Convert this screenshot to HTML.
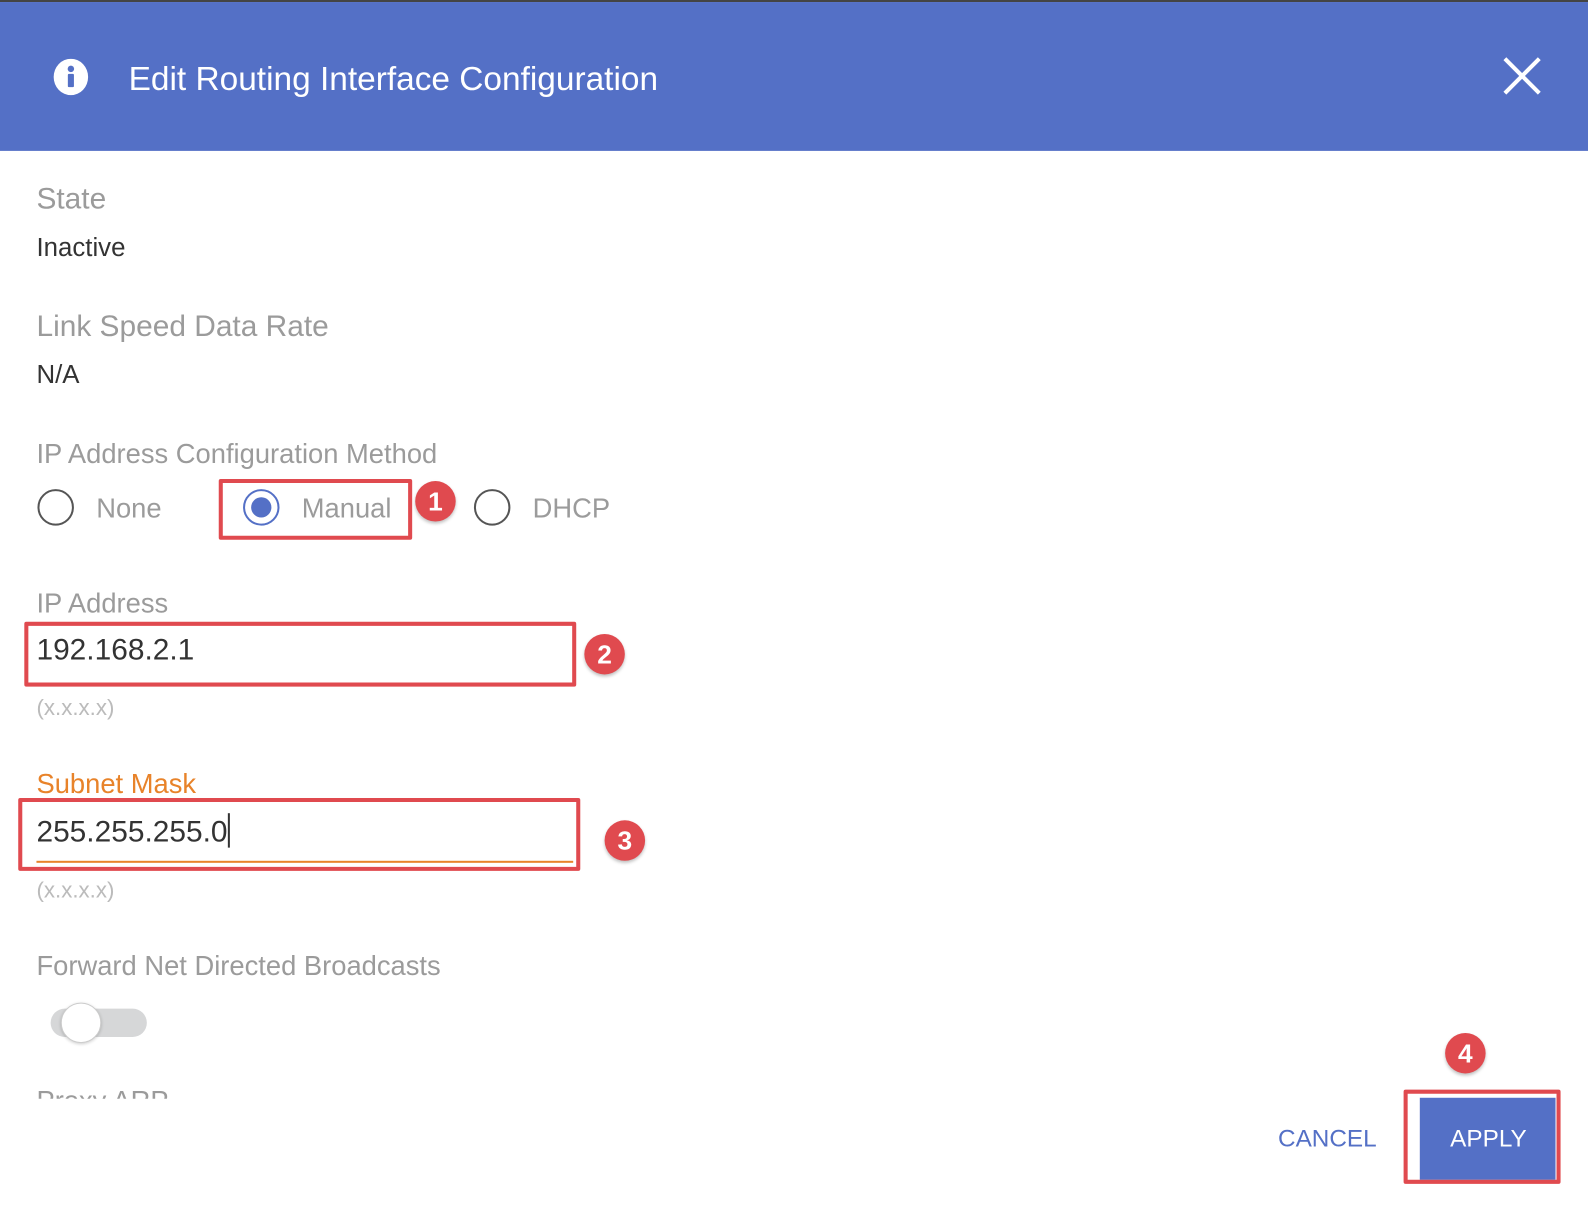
<!DOCTYPE html>
<html><head><meta charset="utf-8"><style>
body{margin:0;width:1588px;height:1206px;background:#fff;position:relative;overflow:hidden;font-family:"Liberation Sans",sans-serif;}
#w{position:absolute;left:0;top:0;width:1568px;height:1191px;transform:scale(1.0127);transform-origin:0 0;}
.a{position:absolute;white-space:nowrap;}
.lbl{color:#9b9b9b;font-size:27px;}
.val{color:#333;font-size:25.5px;}
.red{position:absolute;border:4px solid #e04a4f;box-sizing:border-box;border-radius:2px;}
.badge{position:absolute;width:40px;height:40px;border-radius:50%;background:#e04a4f;color:#fff;font-weight:bold;font-size:26px;text-align:center;line-height:40px;box-shadow:0 2px 3px rgba(0,0,0,.25);}
.radio{position:absolute;width:36px;height:36px;border:2px solid #555;border-radius:50%;box-sizing:border-box;}
</style></head><body>
<div id="w">
<div class="a" style="left:0;top:0;width:1600px;height:2px;background:#444;"></div>
<div class="a" style="left:0;top:2px;width:1600px;height:147px;background:#5470c6;"></div>
<svg class="a" style="left:52px;top:58px" width="36" height="36" viewBox="0 0 36 36"><ellipse cx="18" cy="18" rx="17" ry="18" fill="#fff"/><circle cx="18" cy="10" r="3.2" fill="#5470c6"/><rect x="15" y="15" width="6" height="13" rx="1" fill="#5470c6"/></svg>
<div class="a" style="left:127px;top:59px;color:#fff;font-size:33px;">Edit Routing Interface Configuration</div>
<svg class="a" style="left:1484px;top:56px" width="38" height="38" viewBox="0 0 38 38"><path d="M2 2L36 36M36 2L2 36" stroke="#fff" stroke-width="4"/></svg>

<div class="a lbl" style="left:36px;top:180px;font-size:29.5px;">State</div>
<div class="a val" style="left:36px;top:231px;">Inactive</div>
<div class="a lbl" style="left:36px;top:306px;font-size:29.5px;">Link Speed Data Rate</div>
<div class="a val" style="left:36px;top:356px;">N/A</div>
<div class="a lbl" style="left:36px;top:433px;">IP Address Configuration Method</div>

<div class="radio" style="left:37px;top:483px;"></div>
<div class="a lbl" style="left:95px;top:487px;">None</div>
<div class="radio" style="left:240px;top:483px;border-color:#5470c6;"><div style="position:absolute;left:6px;top:6px;width:20px;height:20px;border-radius:50%;background:#5470c6;"></div></div>
<div class="a lbl" style="left:298px;top:487px;">Manual</div>
<div class="radio" style="left:468px;top:483px;"></div>
<div class="a lbl" style="left:526px;top:487px;">DHCP</div>
<div class="red" style="left:216px;top:473px;width:191px;height:60px;"></div>
<div class="badge" style="left:410px;top:475px;">1</div>

<div class="a lbl" style="left:36px;top:581px;">IP Address</div>
<div class="a" style="left:36px;top:625px;color:#333;font-size:29.5px;">192.168.2.1</div>
<div class="red" style="left:24px;top:614px;width:545px;height:64px;"></div>
<div class="badge" style="left:577px;top:626px;">2</div>
<div class="a" style="left:36px;top:686px;color:#bbb;font-size:22px;">(x.x.x.x)</div>

<div class="a" style="left:36px;top:759px;color:#e8832a;font-size:27px;">Subnet Mask</div>
<div class="a" style="left:36px;top:803px;color:#333;font-size:29.5px;">255.255.255.0<span style="display:inline-block;width:2px;height:34px;background:#333;vertical-align:-6px;"></span></div>
<div class="a" style="left:36px;top:850px;width:530px;height:2px;background:#e8832a;"></div>
<div class="red" style="left:18px;top:788px;width:555px;height:72px;"></div>
<div class="badge" style="left:597px;top:810px;">3</div>
<div class="a" style="left:36px;top:866px;color:#bbb;font-size:22px;">(x.x.x.x)</div>

<div class="a lbl" style="left:36px;top:939px;">Forward Net Directed Broadcasts</div>
<div class="a" style="left:50px;top:996px;width:95px;height:28px;border-radius:14px;background:#d6d7d8;"></div>
<div class="a" style="left:60px;top:990px;width:40px;height:40px;border-radius:50%;background:#fff;border:1px solid #ccc;box-sizing:border-box;box-shadow:0 1px 3px rgba(0,0,0,.2);"></div>
<div class="a" style="left:36px;top:1072px;height:13px;overflow:hidden;"><div class="lbl">Proxy ARP</div></div>

<div class="a" style="left:1262px;top:1111px;color:#5470c6;font-size:24px;">CANCEL</div>
<div class="a" style="left:1402px;top:1084px;width:134px;height:81px;background:#5470c6;"></div>
<div class="a" style="left:1432px;top:1111px;color:#fff;font-size:24px;">APPLY</div>
<div class="red" style="left:1386px;top:1076px;width:155px;height:93px;"></div>
<div class="badge" style="left:1427px;top:1020px;">4</div>
</div>
</body></html>
